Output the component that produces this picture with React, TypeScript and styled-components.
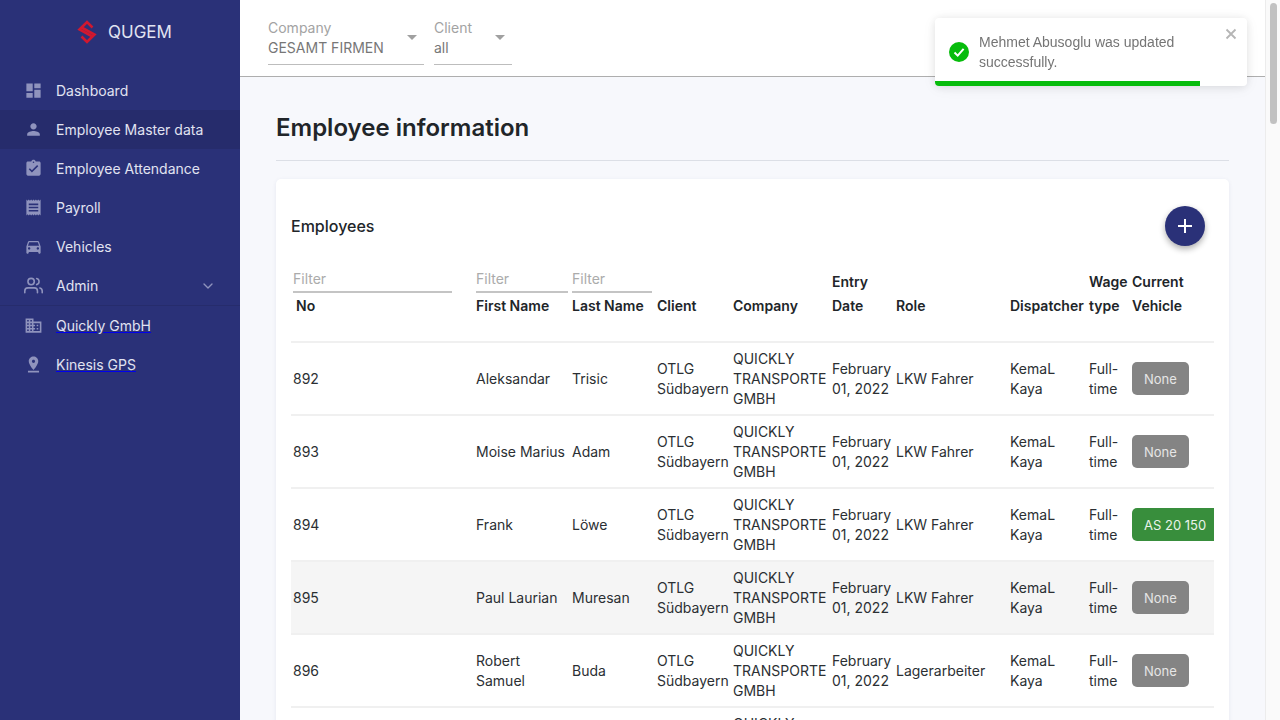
import React from 'react';
import styled, { createGlobalStyle } from 'styled-components';
import { FiChevronDown, FiUsers } from 'react-icons/fi';
import {
    MdAssignmentTurnedIn,
    MdDashboard,
    MdDirectionsCar,
    MdDomain,
    MdPerson,
    MdPinDrop,
    MdReceipt,
} from 'react-icons/md';

const COLOR_NAVY = '#2a3178';
const COLOR_NAVY_DARK = '#262c6c';
const COLOR_TEXT = '#212529';
const FONT_INTER = '"Inter", "Liberation Sans", sans-serif';

const GlobalStyle = createGlobalStyle`
    html,
    body {
        height: 100%;
    }
    body {
        margin: 0;
        overflow: hidden;
        background: #f7f8fc;
        font-family: ${FONT_INTER};
        font-size: 14px;
        color: ${COLOR_TEXT};
    }
`;

const Shell = styled.div`
    display: flex;
    height: 100vh;
    overflow: hidden;
`;

const Sidebar = styled.aside`
    flex: 0 0 240px;
    background: ${COLOR_NAVY};
    color: #e1e3f1;
`;

const Brand = styled.div`
    display: flex;
    align-items: center;
    gap: 11px;
    height: 64px;
    margin-bottom: 7px;
    padding-left: 77px;
    font-size: 17px;
    line-height: 1;
`;

const NavList = styled.nav`
    display: flex;
    flex-direction: column;
`;

const NavItem = styled.div<{ $active?: boolean; $divided?: boolean }>`
    display: flex;
    align-items: center;
    gap: 13px;
    height: 39px;
    padding: 0 24px;
    background: ${(props) => (props.$active ? COLOR_NAVY_DARK : 'transparent')};
    border-bottom: ${(props) => (props.$divided ? `1px solid ${COLOR_NAVY_DARK}` : 'none')};
    font-size: 14px;
    white-space: nowrap;

    svg {
        flex: 0 0 19px;
        width: 19px;
        height: 19px;
        color: #8f93bd;
    }
`;

const NavLink = styled.span`
    text-decoration: underline;
    text-decoration-color: #0000ee;
`;

const NavChevron = styled.span`
    display: flex;
    margin-left: auto;

    svg {
        flex: 0 0 16px;
        width: 16px;
        height: 16px;
    }
`;

const Content = styled.div`
    flex: 1 1 auto;
    min-width: 0;
    overflow: hidden;
`;

const ScrollTrack = styled.div`
    flex: 0 0 15px;
    box-sizing: border-box;
    padding: 3px 3px 0 4px;
    background: #fafafa;
    border-left: 1px solid #ececec;
`;

const ScrollThumb = styled.div`
    height: 121px;
    border-radius: 4px;
    background: #c1c1c1;
`;

const TopBar = styled.header`
    display: flex;
    gap: 10px;
    height: 77px;
    padding: 18px 28px 0;
    box-sizing: border-box;
    background: #fff;
    border-bottom: 1px solid #aeaeae;
`;

const Select = styled.div<{ $width: number }>`
    position: relative;
    display: flex;
    flex-direction: column;
    box-sizing: border-box;
    width: ${(props) => props.$width}px;
    height: 47px;
    border-bottom: 1px solid #bdbdbd;
    line-height: 20px;
    white-space: nowrap;

    &::after {
        content: '';
        position: absolute;
        top: 17px;
        right: 7px;
        border-left: 5px solid transparent;
        border-right: 5px solid transparent;
        border-top: 5px solid #a0a0a0;
    }
`;

const SelectLabel = styled.span`
    color: #a3a3a3;
`;

const SelectValue = styled.span`
    color: #777;
`;

const Main = styled.main`
    padding: 33px 36px 0;
`;

const PageTitle = styled.h1`
    margin: 0;
    padding-bottom: 14px;
    border-bottom: 1px solid #dcdfe6;
    font-size: 24px;
    font-weight: 600;
    line-height: 36px;
    color: ${COLOR_TEXT};
`;

const Card = styled.section`
    margin-top: 18px;
    padding: 0 15px;
    background: #fff;
    border-radius: 5px;
    box-shadow: 0 1px 4px rgba(40, 50, 110, 0.08);
`;

const CardHeader = styled.div`
    display: flex;
    align-items: flex-start;
    justify-content: space-between;
    box-sizing: border-box;
    height: 87px;
    padding: 27px 9px 0 0;
`;

const CardTitle = styled.h2`
    margin: 0;
    font-size: 16px;
    font-weight: 500;
    line-height: 40px;
`;

const AddButton = styled.button`
    display: flex;
    align-items: center;
    justify-content: center;
    width: 40px;
    height: 40px;
    padding: 0;
    border: none;
    border-radius: 50%;
    background: ${COLOR_NAVY};
    box-shadow: 0 3px 6px rgba(0, 0, 0, 0.32);
`;

const TableClip = styled.div`
    overflow: hidden;
`;

const Table = styled.table`
    width: 930px;
    table-layout: fixed;
    border-collapse: collapse;
`;

const HeadCell = styled.th<{ $inset?: boolean }>`
    padding: 0 2px 23px ${(props) => (props.$inset ? '5px' : '2px')};
    vertical-align: bottom;
    text-align: left;
    font-size: 14px;
    font-weight: 600;
    line-height: 24px;
`;

const FilterInput = styled.input<{ $width: number }>`
    display: block;
    box-sizing: border-box;
    width: ${(props) => props.$width}px;
    height: 27px;
    margin: 0 0 1px -3px;
    padding: 0;
    border: none;
    border-bottom: 2px solid #c4c4c4;
    outline: none;
    background: transparent;
    font-family: ${FONT_INTER};
    font-size: 14px;

    &::placeholder {
        color: #ababab;
        opacity: 1;
    }
`;

const FilterInputPlain = styled(FilterInput)`
    margin-left: 0;
`;

const Row = styled.tr<{ $hovered?: boolean }>`
    height: 73px;
    border-top: 2px solid #f0f0f0;
    background: ${(props) => (props.$hovered ? '#f5f5f5' : 'transparent')};
`;

const Cell = styled.td`
    padding: 0 2px;
    font-size: 14px;
    line-height: 20px;
    color: #2b2f33;
`;

const VehicleBadge = styled.span<{ $assigned?: boolean }>`
    display: inline-block;
    box-sizing: border-box;
    height: 33px;
    padding: 0 12px;
    border-radius: 5px;
    background: ${(props) => (props.$assigned ? '#388e3c' : '#848484')};
    color: ${(props) => (props.$assigned ? '#e9f3ea' : '#e6e6e6')};
    font-size: 13px;
    line-height: 34px;
    white-space: nowrap;
`;

const Toast = styled.div`
    position: fixed;
    top: 18px;
    left: 935px;
    z-index: 2;
    display: flex;
    gap: 10px;
    box-sizing: border-box;
    width: 312px;
    height: 68px;
    padding: 14px 14px 0;
    overflow: hidden;
    border-radius: 4px;
    background: #fff;
    box-shadow: 0 1px 10px rgba(0, 0, 0, 0.1), 0 2px 15px rgba(0, 0, 0, 0.05);
    font-family: 'Liberation Sans', Arial, sans-serif;
    font-size: 14px;
    line-height: 20px;
    color: #757575;
`;

const ToastIcon = styled.svg`
    flex: 0 0 20px;
    width: 20px;
    height: 20px;
    margin-top: 10px;
`;

const ToastMessage = styled.div`
    flex: 1 1 auto;
`;

const ToastClose = styled.svg`
    position: absolute;
    top: 10px;
    right: 10px;
    width: 12px;
    height: 12px;
`;

const ToastProgress = styled.div`
    position: absolute;
    left: 0;
    bottom: 0;
    height: 5px;
    background: #07bc0c;
`;

interface Employee {
    no: number;
    firstName: string;
    lastName: string;
    role: string;
    vehicle?: string;
}

const EMPLOYEES: Employee[] = [
    { no: 892, firstName: 'Aleksandar', lastName: 'Trisic', role: 'LKW Fahrer' },
    { no: 893, firstName: 'Moise Marius', lastName: 'Adam', role: 'LKW Fahrer' },
    { no: 894, firstName: 'Frank', lastName: 'Löwe', role: 'LKW Fahrer', vehicle: 'AS 20 150' },
    { no: 895, firstName: 'Paul Laurian', lastName: 'Muresan', role: 'LKW Fahrer' },
    { no: 896, firstName: 'Robert Samuel', lastName: 'Buda', role: 'Lagerarbeiter' },
    { no: 897, firstName: 'Stefan', lastName: 'Hofer', role: 'LKW Fahrer' },
];

const COLUMN_WIDTHS = [183, 96, 85, 76, 99, 64, 114, 79, 43, 91];

function LogoMark(): React.ReactElement {
    return (
        <svg width="20" height="24" viewBox="0 0 20 24" fill="none" stroke="#d0182f" strokeWidth="2.6">
            <path d="M15.5 7.5 L10 2 L2.5 9.5 L15.5 16.5" />
            <path d="M4.5 16.5 L10 22 L17.5 14.5 L4.5 7.5" />
        </svg>
    );
}

export default function App(): React.ReactElement {
    return (
        <>
            <GlobalStyle />
            <Shell>
                <Sidebar>
                    <Brand>
                        <LogoMark />
                        <span>QUGEM</span>
                    </Brand>
                    <NavList>
                        <NavItem>
                            <MdDashboard />
                            Dashboard
                        </NavItem>
                        <NavItem $active>
                            <MdPerson />
                            Employee Master data
                        </NavItem>
                        <NavItem>
                            <MdAssignmentTurnedIn />
                            Employee Attendance
                        </NavItem>
                        <NavItem>
                            <MdReceipt />
                            Payroll
                        </NavItem>
                        <NavItem>
                            <MdDirectionsCar />
                            Vehicles
                        </NavItem>
                        <NavItem $divided>
                            <FiUsers />
                            Admin
                            <NavChevron>
                                <FiChevronDown />
                            </NavChevron>
                        </NavItem>
                        <NavItem>
                            <MdDomain />
                            <NavLink>Quickly GmbH</NavLink>
                        </NavItem>
                        <NavItem>
                            <MdPinDrop />
                            <NavLink>Kinesis GPS</NavLink>
                        </NavItem>
                    </NavList>
                </Sidebar>
                <Content>
                    <TopBar>
                        <Select $width={156}>
                            <SelectLabel>Company</SelectLabel>
                            <SelectValue>GESAMT FIRMEN</SelectValue>
                        </Select>
                        <Select $width={78}>
                            <SelectLabel>Client</SelectLabel>
                            <SelectValue>all</SelectValue>
                        </Select>
                    </TopBar>
                    <Main>
                        <PageTitle>Employee information</PageTitle>
                        <Card>
                            <CardHeader>
                                <CardTitle>Employees</CardTitle>
                                <AddButton aria-label="Add employee">
                                    <svg width="16" height="16" viewBox="0 0 16 16" stroke="#fff" strokeWidth="2">
                                        <path d="M8 1 V15 M1 8 H15" />
                                    </svg>
                                </AddButton>
                            </CardHeader>
                            <TableClip>
                                <Table>
                                    <colgroup>
                                        {COLUMN_WIDTHS.map((width, index) => (
                                            <col key={index} width={width} />
                                        ))}
                                    </colgroup>
                                    <thead>
                                        <tr>
                                            <HeadCell $inset>
                                                <FilterInput $width={159} placeholder="Filter" />
                                                No
                                            </HeadCell>
                                            <HeadCell>
                                                <FilterInputPlain $width={92} placeholder="Filter" />
                                                First Name
                                            </HeadCell>
                                            <HeadCell>
                                                <FilterInputPlain $width={80} placeholder="Filter" />
                                                Last Name
                                            </HeadCell>
                                            <HeadCell>Client</HeadCell>
                                            <HeadCell>Company</HeadCell>
                                            <HeadCell>Entry Date</HeadCell>
                                            <HeadCell>Role</HeadCell>
                                            <HeadCell>Dispatcher</HeadCell>
                                            <HeadCell>Wage type</HeadCell>
                                            <HeadCell>Current Vehicle</HeadCell>
                                        </tr>
                                    </thead>
                                    <tbody>
                                        {EMPLOYEES.map((employee) => (
                                            <Row key={employee.no} $hovered={employee.no === 895}>
                                                <Cell>{employee.no}</Cell>
                                                <Cell>{employee.firstName}</Cell>
                                                <Cell>{employee.lastName}</Cell>
                                                <Cell>OTLG Südbayern</Cell>
                                                <Cell>QUICKLY TRANSPORTE GMBH</Cell>
                                                <Cell>February 01, 2022</Cell>
                                                <Cell>{employee.role}</Cell>
                                                <Cell>KemaL Kaya</Cell>
                                                <Cell>Full-time</Cell>
                                                <Cell>
                                                    <VehicleBadge $assigned={Boolean(employee.vehicle)}>
                                                        {employee.vehicle ?? 'None'}
                                                    </VehicleBadge>
                                                </Cell>
                                            </Row>
                                        ))}
                                    </tbody>
                                </Table>
                            </TableClip>
                        </Card>
                    </Main>
                </Content>
                <ScrollTrack>
                    <ScrollThumb />
                </ScrollTrack>
            </Shell>
            <Toast>
                <ToastIcon viewBox="0 0 20 20">
                    <circle cx="10" cy="10" r="10" fill="#07bc0c" />
                    <path d="M5.5 10.5 L8.7 13.6 L14.6 6.8" fill="none" stroke="#fff" strokeWidth="2" />
                </ToastIcon>
                <ToastMessage>Mehmet Abusoglu was updated successfully.</ToastMessage>
                <ToastClose viewBox="0 0 12 12">
                    <path d="M1.5 1.5 L10.5 10.5 M10.5 1.5 L1.5 10.5" stroke="#b5b5b5" strokeWidth="1.8" />
                </ToastClose>
                <ToastProgress style={{ width: `${(265 / 312) * 100}%` }} />
            </Toast>
        </>
    );
}
